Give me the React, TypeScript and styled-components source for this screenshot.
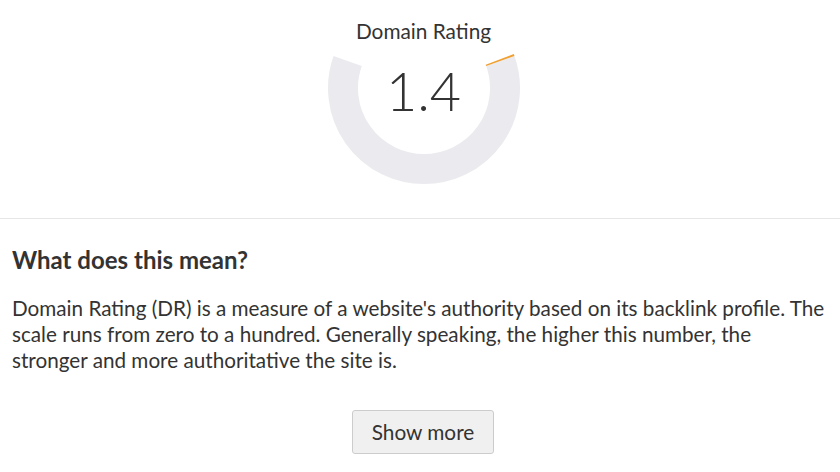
import styled, { createGlobalStyle } from "styled-components";

const GlobalStyle = createGlobalStyle`
  html, body {
    margin: 0;
    padding: 0;
    background: #ffffff;
  }
  body {
    font-family: Lato, "Open Sans", sans-serif;
    color: #333333;
  }
`;

const Page = styled.div`
  width: 840px;
  height: 472px;
  overflow: hidden;
  background: #ffffff;
`;

const RatingSection = styled.section`
  display: flex;
  flex-direction: column;
  align-items: center;
  padding: 18px 0 32px 7px;
  border-bottom: 1px solid #e6e6e6;
`;

const Title = styled.div`
  font-size: 20.8px;
  line-height: 25px;
  color: #333333;
`;

const GaugeWrap = styled.div`
  position: relative;
  width: 196px;
  height: 138px;
  margin-top: 5px;
`;

const Value = styled.div`
  position: absolute;
  left: 0;
  right: 0;
  top: 16px;
  text-align: center;
  font-size: 54px;
  font-weight: 300;
  line-height: 1;
  color: #333333;
`;

const InfoSection = styled.section`
  padding: 27px 11px 0 12px;
`;

const Heading = styled.h2`
  margin: 0;
  font-size: 24px;
  font-weight: 700;
  line-height: 1.2;
  color: #333333;
`;

const Description = styled.p`
  margin: 20px 0 0;
  font-size: 20.7px;
  line-height: 26px;
  color: #333333;
`;

const ButtonRow = styled.div`
  display: flex;
  justify-content: center;
  padding: 37px 0 0 6px;
`;

const MoreButton = styled.button`
  width: 142px;
  height: 44px;
  background: #f0f0f0;
  border: 1px solid #cccccc;
  border-radius: 3px;
  font-family: Lato, "Open Sans", sans-serif;
  font-size: 20.8px;
  color: #333333;
  cursor: pointer;
`;

const polar = (r: number, deg: number) => {
  const a = (deg * Math.PI) / 180;
  return `${(r * Math.cos(a)).toFixed(2)} ${(r * Math.sin(a)).toFixed(2)}`;
};

const Gauge = ({ value }: { value: number }) => {
  const r = 81;
  const end = -19.5;
  const sweep = 220;
  const filled = Math.max((value / 100) * sweep * 0.4, 1);
  return (
    <svg width="196" height="138" viewBox="-98 -40 196 138">
      <path
        d={`M ${polar(r, end)} A ${r} ${r} 0 1 1 ${polar(r, 180 - end)}`}
        fill="none"
        stroke="#ebebef"
        strokeWidth="30"
      />
      <path
        d={`M ${polar(r, end - filled)} A ${r} ${r} 0 0 1 ${polar(r, end)}`}
        fill="none"
        stroke="#f0a030"
        strokeWidth="30"
      />
    </svg>
  );
};

const App = () => {
  return (
    <Page>
      <GlobalStyle />
      <RatingSection>
        <Title>Domain Rating</Title>
        <GaugeWrap>
          <Gauge value={1.4} />
          <Value>1.4</Value>
        </GaugeWrap>
      </RatingSection>
      <InfoSection>
        <Heading>What does this mean?</Heading>
        <Description>
          Domain Rating (DR) is a measure of a website's authority based on its
          backlink profile. The scale runs from zero to a hundred. Generally
          speaking, the higher this number, the stronger and more authoritative
          the site is.
        </Description>
      </InfoSection>
      <ButtonRow>
        <MoreButton>Show more</MoreButton>
      </ButtonRow>
    </Page>
  );
};

export default App;
